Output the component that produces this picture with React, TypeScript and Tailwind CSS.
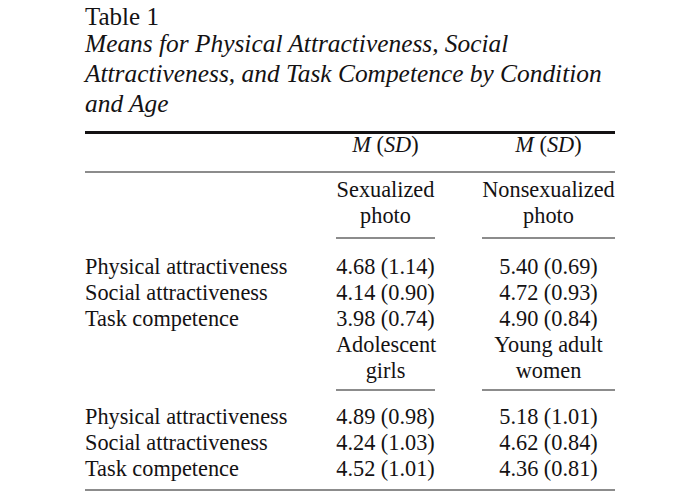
const block1 = [
  ["Physical attractiveness", "4.68 (1.14)", "5.40 (0.69)"],
  ["Social attractiveness", "4.14 (0.90)", "4.72 (0.93)"],
  ["Task competence", "3.98 (0.74)", "4.90 (0.84)"],
];

const block2 = [
  ["Physical attractiveness", "4.89 (0.98)", "5.18 (1.01)"],
  ["Social attractiveness", "4.24 (1.03)", "4.62 (0.84)"],
  ["Task competence", "4.52 (1.01)", "4.36 (0.81)"],
];

const grid = "grid grid-cols-[204px_99px_133px] gap-x-[47px]";

const DataRows = ({ rows }: { rows: string[][] }) => (
  <>
    {rows.map(([label, a, b]) => (
      <div key={label + a} className={grid}>
        <div className="whitespace-nowrap">{label}</div>
        <div className="text-center whitespace-nowrap">{a}</div>
        <div className="text-center whitespace-nowrap">{b}</div>
      </div>
    ))}
  </>
);

const ColumnRules = () => (
  <div className={grid}>
    <div />
    <div className="h-[2px] bg-[#8c8c8c]" />
    <div className="h-[2px] bg-[#8c8c8c]" />
  </div>
);

export default function App() {
  return (
    <div className="w-[695px] h-[494px] bg-white text-[#141213] font-['Liberation_Serif',serif] pl-[85px] pt-[6px] overflow-hidden">
      <div className="w-[530px]">
        <div className="text-[25px] leading-[22px]">Table 1</div>
        <div className="text-[25.4px] leading-[30px] italic">
          Means for Physical Attractiveness, Social
          <br />
          Attractiveness, and Task Competence by Condition
          <br />
          and Age
        </div>

        <div className="mt-[13px] h-[3px] bg-[#141213]" />

        <div className="text-[22.3px] leading-[22px]">
          <div className={grid}>
            <div />
            <div className="text-center whitespace-nowrap">
              <i>M</i> (<i>SD</i>)
            </div>
            <div className="text-center whitespace-nowrap">
              <i>M</i> (<i>SD</i>)
            </div>
          </div>
        </div>

        <div className="mt-[15px] h-[2px] bg-[#8c8c8c]" />

        <div className="text-[22.3px] leading-[26px]">
          <div className={`${grid} mt-[4px]`}>
            <div />
            <div className="text-center">
              Sexualized
              <br />
              photo
            </div>
            <div className="text-center">
              Nonsexualized
              <br />
              photo
            </div>
          </div>

          <div className="mt-[8px]">
            <ColumnRules />
          </div>

          <div className="mt-[15px]">
            <DataRows rows={block1} />
            <div className={grid}>
              <div />
              <div className="text-center">
                Adolescent
                <br />
                girls
              </div>
              <div className="text-center">
                Young adult
                <br />
                women
              </div>
            </div>
          </div>

          <div className="mt-[5px]">
            <ColumnRules />
          </div>

          <div className="mt-[13px]">
            <DataRows rows={block2} />
          </div>
        </div>

        <div className="mt-[7px] h-[2px] bg-[#8c8c8c]" />
      </div>
    </div>
  );
}
